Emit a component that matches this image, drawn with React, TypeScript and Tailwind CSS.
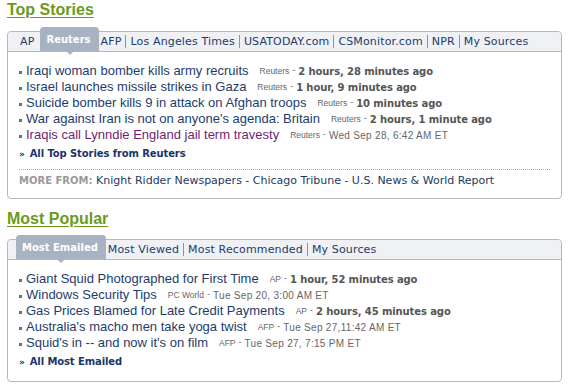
import React from 'react';

type Story = {
  title: string;
  source: string;
  time: string;
  recent?: boolean;
  visited?: boolean;
};

const topStories: Story[] = [
  { title: 'Iraqi woman bomber kills army recruits', source: 'Reuters', time: '2 hours, 28 minutes ago', recent: true },
  { title: 'Israel launches missile strikes in Gaza', source: 'Reuters', time: '1 hour, 9 minutes ago', recent: true },
  { title: 'Suicide bomber kills 9 in attack on Afghan troops', source: 'Reuters', time: '10 minutes ago', recent: true },
  { title: "War against Iran is not on anyone's agenda: Britain", source: 'Reuters', time: '2 hours, 1 minute ago', recent: true },
  { title: 'Iraqis call Lynndie England jail term travesty', source: 'Reuters', time: 'Wed Sep 28, 6:42 AM ET', visited: true },
];

const popular: Story[] = [
  { title: 'Giant Squid Photographed for First Time', source: 'AP', time: '1 hour, 52 minutes ago', recent: true },
  { title: 'Windows Security Tips', source: 'PC World', time: 'Tue Sep 20, 3:00 AM ET' },
  { title: 'Gas Prices Blamed for Late Credit Payments', source: 'AP', time: '2 hours, 45 minutes ago', recent: true },
  { title: "Australia's macho men take yoga twist", source: 'AFP', time: 'Tue Sep 27,11:42 AM ET' },
  { title: "Squid's in -- and now it's on film", source: 'AFP', time: 'Tue Sep 27, 7:15 PM ET' },
];

const verdana = "font-['DejaVu_Sans',Verdana,sans-serif]";
const arial = "font-['Liberation_Sans',Arial,sans-serif]";

const Heading = ({ children }: { children: React.ReactNode }) => (
  <h2 className={`${arial} ml-[7px] h-[20px] text-[16px] leading-[20px] font-bold text-[#6c9a1c] underline underline-offset-[2px]`}>
    {children}
  </h2>
);

const Tabs = ({ tabs, active }: { tabs: string[]; active: number }) => (
  <div className="flex h-[20px] items-end rounded-t-[4px] border-b border-[#b4b8bd] bg-[#eff1f4] pl-[8px]">
    {tabs.map((tab, i) => {
      if (i === active) {
        return (
          <div
            key={tab}
            className={`${verdana} relative flex h-[24px] items-center rounded-t-[4px] bg-[#a7b3c2] pl-[6px] pr-[8px] text-[10px] font-bold text-white`}
          >
            {tab}
            <span className="absolute left-1/2 top-full -ml-[4px] h-0 w-0 border-x-[4px] border-t-[4px] border-x-transparent border-t-[#a7b3c2]" />
          </div>
        );
      }
      const afterActive = i - 1 === active;
      const beforeActive = i + 1 === active;
      const sep = i > 0 && !afterActive;
      return (
        <div key={tab} className="flex h-[19px] items-center">
          {sep && <span className="h-[13px] w-px bg-[#8a94a3]" />}
          <span
            className={`${verdana} ${afterActive ? 'pl-[2px]' : 'pl-[4px]'} ${beforeActive ? 'pr-[6px]' : 'pr-[4px]'} text-[11px] leading-[19px] tracking-[0.15px] text-[#1f3a6a]`}
          >
            {tab}
          </span>
        </div>
      );
    })}
  </div>
);

const StoryRow = ({ s }: { s: Story }) => (
  <li className="flex h-[16px] items-center whitespace-nowrap">
    <span className="mr-[4px] mt-[2px] h-[3px] w-[3px] bg-[#5f7390]" />
    <span className={`${arial} text-[13px] leading-[16px] ${s.visited ? 'text-[#6f1f73]' : 'text-[#1d3c6c]'}`}>{s.title}</span>
    <span className={`${arial} ml-[11px] text-[8.5px] text-[#666]`}>{s.source}</span>
    <span className={`${arial} mx-[3px] text-[9px] text-[#666]`}>-</span>
    {s.recent ? (
      <span className={`${verdana} text-[10px] font-bold text-[#555] tracking-[-0.1px]`}>{s.time}</span>
    ) : (
      <span className={`${arial} text-[10px] tracking-[0.3px] text-[#666]`}>{s.time}</span>
    )}
  </li>
);

const MoreLink = ({ children }: { children: React.ReactNode }) => (
  <div className={`${verdana} mt-[3px] h-[16px] text-[10px] leading-[16px] font-bold text-[#1b3566] tracking-[-0.1px]`}>
    <span className="mr-[5px] text-[9px]">»</span>
    {children}
  </div>
);

export default function App() {
  return (
    <div className="min-h-screen w-[569px] bg-white">
      <Heading>Top Stories</Heading>

      <div className="ml-[7px] mt-[11px] w-[555px] rounded-[4px] border border-[#b4b8bd]">
        <Tabs
          tabs={['AP', 'Reuters', 'AFP', 'Los Angeles Times', 'USATODAY.com', 'CSMonitor.com', 'NPR', 'My Sources']}
          active={1}
        />
        <div className="px-[11px] pb-[9px] pt-[11px]">
          <ul>
            {topStories.map((s) => (
              <StoryRow key={s.title} s={s} />
            ))}
          </ul>
          <MoreLink>All Top Stories from Reuters</MoreLink>
          <div className="mt-[7px] border-t border-dotted border-[#aaa]" />
          <div className={`${verdana} mt-[3px] h-[16px] text-[11px] leading-[16px] whitespace-nowrap text-[#1d3a5e]`}>
            <span className="text-[10px] font-bold text-[#999]">MORE FROM:</span>{' '}
            Knight Ridder Newspapers - Chicago Tribune - U.S. News &amp; World Report
          </div>
        </div>
      </div>

      <div className="mt-[10px]">
        <Heading>Most Popular</Heading>
      </div>

      <div className="ml-[7px] mt-[10px] w-[555px] rounded-[4px] border border-[#b4b8bd]">
        <Tabs tabs={['Most Emailed', 'Most Viewed', 'Most Recommended', 'My Sources']} active={0} />
        <div className="px-[11px] pb-[11px] pt-[11px]">
          <ul>
            {popular.map((s) => (
              <StoryRow key={s.title} s={s} />
            ))}
          </ul>
          <MoreLink>All Most Emailed</MoreLink>
        </div>
      </div>
    </div>
  );
}
